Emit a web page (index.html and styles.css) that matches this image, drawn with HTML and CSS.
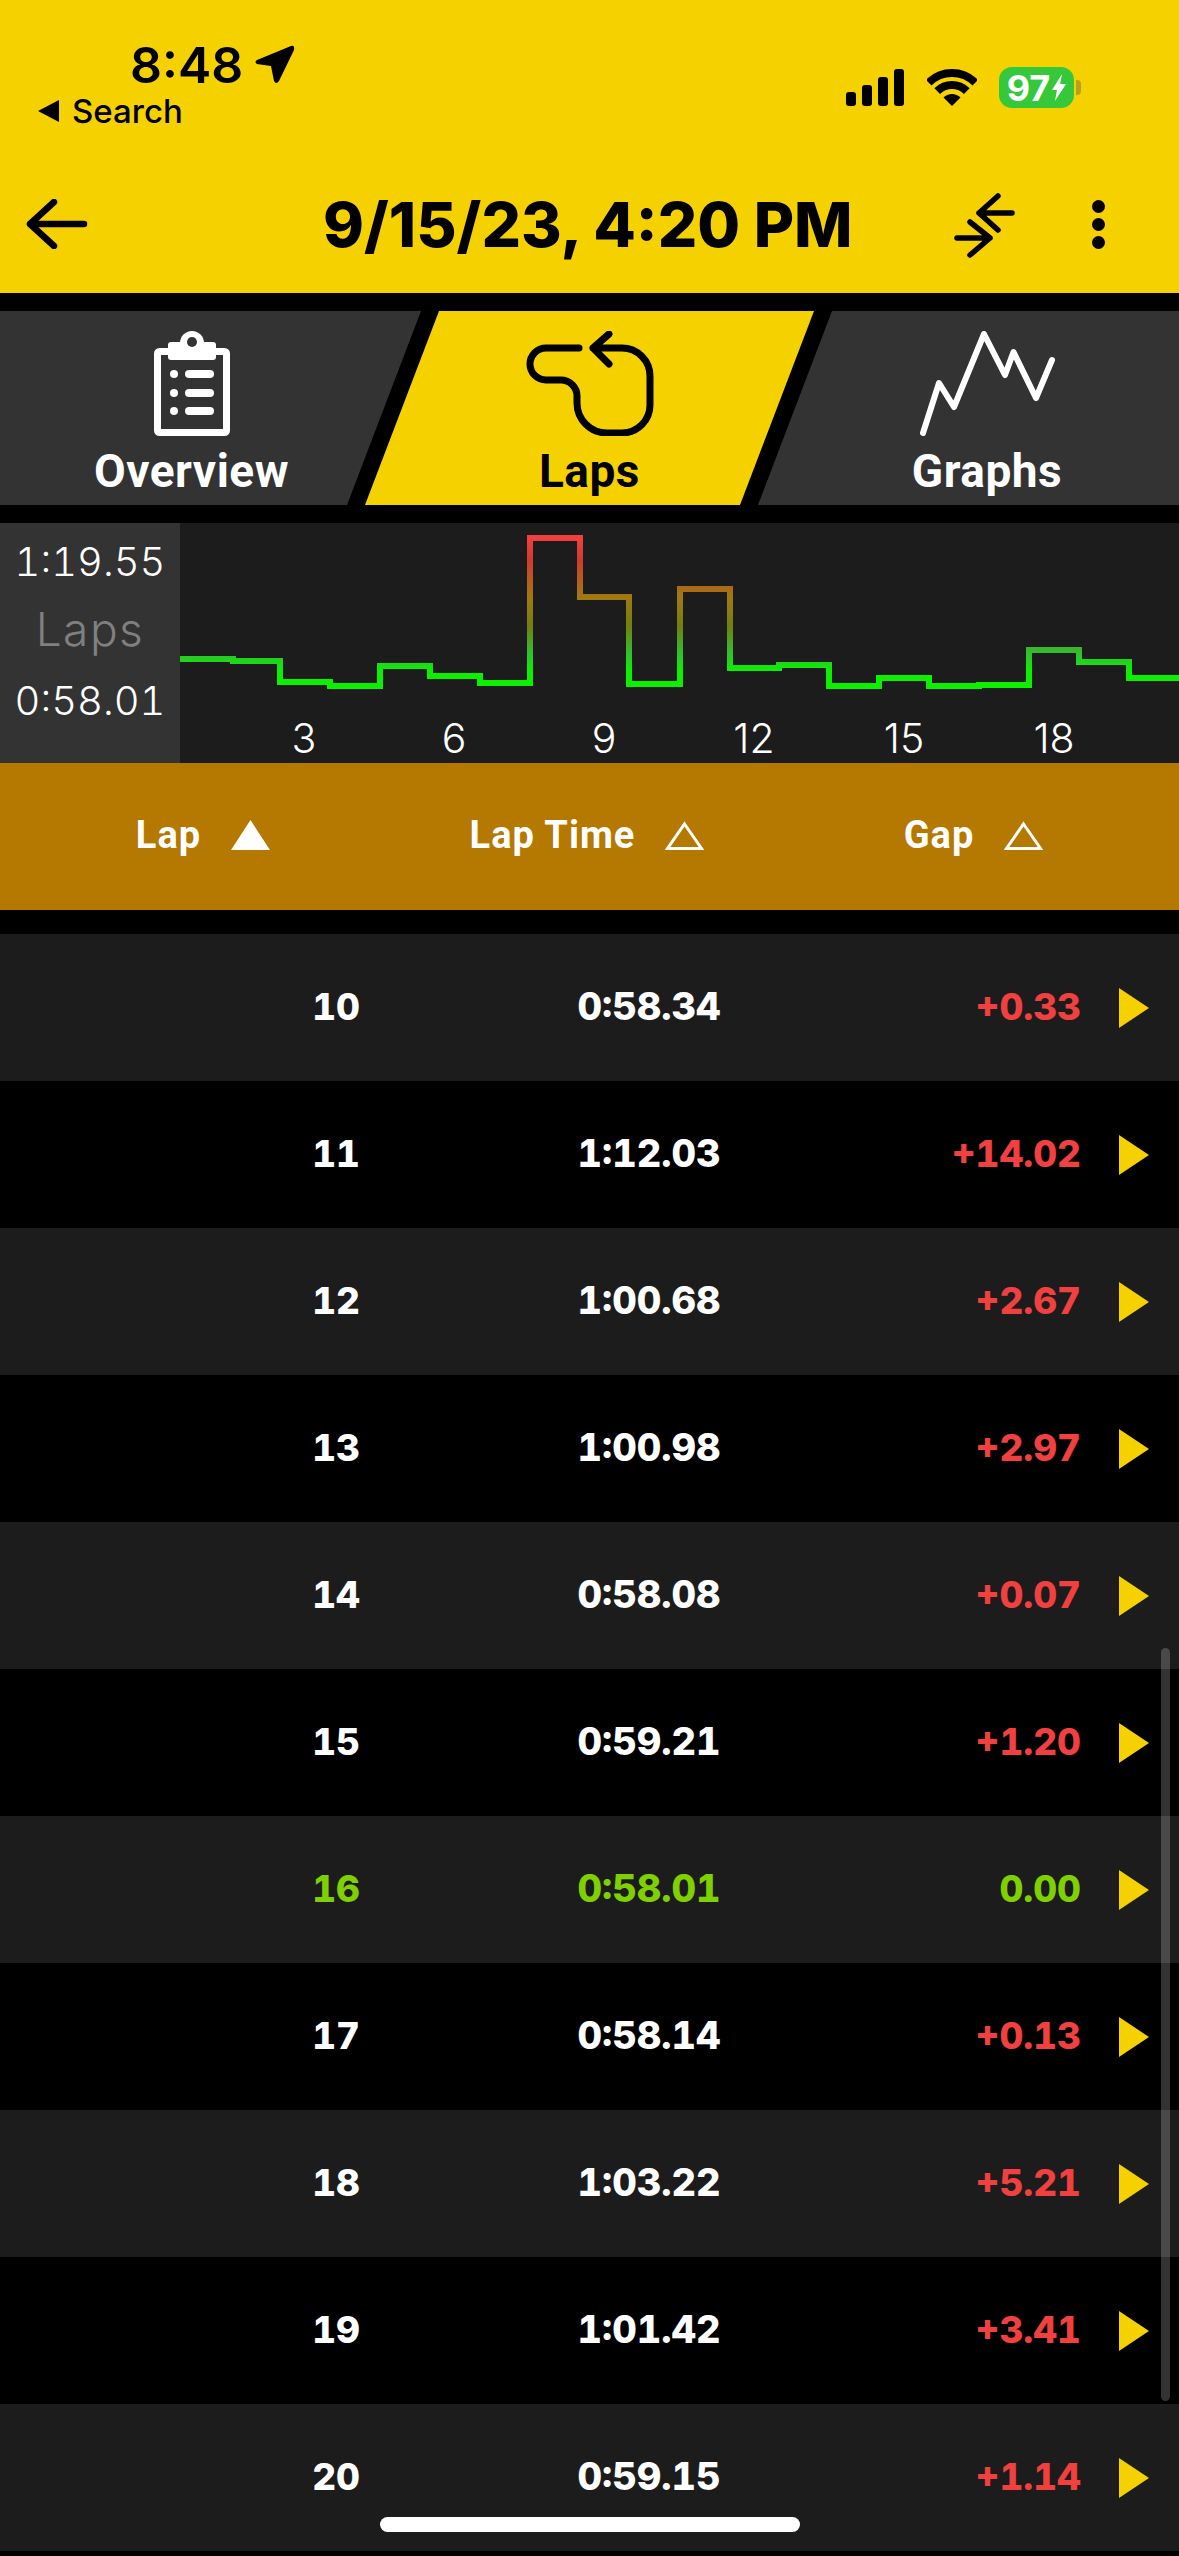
FILE: index.html
```html
<!DOCTYPE html>
<html lang="en">
<head>
    <meta charset="UTF-8">
    <meta name="viewport" content="width=device-width, initial-scale=1.0">
    <title>Laps</title>
    <link rel="stylesheet" href="styles.css">
</head>
<body>
    <div class="screen">
        <header class="top">
            <div class="status">
                <div class="status-left">
                    <div class="clock">
                        <span>8:48</span>
                        <svg class="loc" viewBox="0 0 40 40"><path d="M36 1 2 15q-3 2 0 4l14 2 3 15q2 4 5 0L39 5q1-5-3-4z"/></svg>
                    </div>
                    <div class="crumb">
                        <svg class="crumb-arrow" viewBox="0 0 22 22"><path d="M21 0v22L0 11z"/></svg>
                        <span>Search</span>
                    </div>
                </div>
                <div class="status-right">
                    <svg class="signal" viewBox="0 0 58 37">
                        <rect x="0" y="23" width="10" height="14" rx="3"/>
                        <rect x="16" y="16" width="10" height="21" rx="3"/>
                        <rect x="32" y="8" width="10" height="29" rx="3"/>
                        <rect x="48" y="0" width="10" height="37" rx="3"/>
                    </svg>
                    <svg class="wifi" viewBox="0 0 50 37">
                        <path d="M1.700 13.700A33 33 0 0 1 48.300 13.700" fill="none" stroke="#000" stroke-width="8"/>
                        <path d="M10.200 22.200A21 21 0 0 1 39.800 22.200" fill="none" stroke="#000" stroke-width="8"/>
                        <path d="M25 37 16.500 28.500A12 12 0 0 1 33.500 28.500z"/>
                    </svg>
                    <div class="battery">
                        <span>97</span>
                        <svg class="bolt" viewBox="0 0 14 27"><path d="M10 0 0 16h5L3 27 14 10H8z"/></svg>
                    </div>
                    <div class="battery-nub"></div>
                </div>
            </div>
            <nav class="nav">
                <svg class="back" viewBox="0 0 62 50" fill="none"><path d="M58 25H4M28 3 4 25l24 22" stroke="#000" stroke-width="6.500" stroke-linecap="round" stroke-linejoin="round"/></svg>
                <h1>9/15/23, 4:20 PM</h1>
                <svg class="swap" viewBox="0 0 62 68" fill="none"><path d="M59 23H26M45 6 26 23l19 17M4 48h33M17 32l20 16-20 17" stroke="#000" stroke-width="5.500" stroke-linecap="round" stroke-linejoin="round"/></svg>
                <div class="dots"><i></i><i></i><i></i></div>
            </nav>
        </header>

        <div class="tabs">
            <div class="tab tab-first">
                <svg class="tab-icon" viewBox="0 0 76 105">
                    <rect x="3.500" y="20.500" width="69" height="81" rx="2" fill="none" stroke="#fff" stroke-width="7"/>
                    <rect x="14" y="11" width="48" height="18" rx="3" fill="#fff"/>
                    <circle cx="38" cy="12" r="12" fill="#fff"/>
                    <circle cx="38" cy="11" r="5" fill="#333"/>
                    <circle cx="20" cy="43" r="4" fill="#fff"/><rect x="31" y="39" width="29" height="8" rx="4" fill="#fff"/>
                    <circle cx="20" cy="62" r="4" fill="#fff"/><rect x="31" y="58" width="29" height="8" rx="4" fill="#fff"/>
                    <circle cx="20" cy="80" r="4" fill="#fff"/><rect x="31" y="76" width="29" height="8" rx="4" fill="#fff"/>
                </svg>
                <span>Overview</span>
            </div>
            <div class="tab tab-active">
                <svg class="tab-icon" viewBox="0 0 128 105" fill="none"><path d="M53 17H20a16 16 0 0 0 0 32H35a16 16 0 0 1 16 16V72a30 30 0 0 0 30 30H96a28 28 0 0 0 28-28V45A28 28 0 0 0 96 17H67M83 3 67 17l16 16" stroke="#000" stroke-width="7" stroke-linecap="round" stroke-linejoin="round"/></svg>
                <span>Laps</span>
            </div>
            <div class="tab tab-last">
                <svg class="tab-icon" viewBox="0 0 135 105" fill="none"><path d="M3 102 19 52l15 24L64 3l21 41 8.500-23L116 67l16-38" stroke="#fff" stroke-width="6" stroke-linecap="round" stroke-linejoin="round"/></svg>
                <span>Graphs</span>
            </div>
        </div>

        <section class="summary">
            <div class="range">
                <span>1:19.55</span>
                <span class="range-title">Laps</span>
                <span>0:58.01</span>
            </div>
            <div class="chart">
                <svg class="chart-line" viewBox="180 523 999 187" fill="none">
                    <defs>
                        <linearGradient id="speed" gradientUnits="userSpaceOnUse" x1="0" y1="538" x2="0" y2="686">
                            <stop offset="0" stop-color="#f04040"/>
                            <stop offset="0.15" stop-color="#d03a30"/>
                            <stop offset="0.4" stop-color="#a07a10"/>
                            <stop offset="0.6" stop-color="#708010"/>
                            <stop offset="0.78" stop-color="#30c030"/>
                            <stop offset="0.9" stop-color="#0cf000"/>
                            <stop offset="1" stop-color="#0cf000"/>
                        </linearGradient>
                    </defs>
                    <path stroke="url(#speed)" stroke-width="6" stroke-linejoin="miter" d="M180 659H233V661H280V682H330V686H380V666H430V676H480V683H530V538H580V597H629V684H680V589H730V668H779V665H829V686H879V678H929V686H979V685H1029V650H1079V662H1129V678H1179"/>
                </svg>
                <div class="axis">
                    <span>3</span><span>6</span><span>9</span><span>12</span><span>15</span><span>18</span>
                </div>
            </div>
        </section>

        <div class="heads">
            <div class="head"><span>Lap</span><svg class="sort" viewBox="0 0 39 30"><path d="M19.500 0 39 30H0z" fill="#fff"/></svg></div>
            <div class="head"><span>Lap Time</span><svg class="sort" viewBox="0 0 39 30"><path d="M19.500 4 36.500 28.500H2.500z" fill="none" stroke="#fff" stroke-width="3"/></svg></div>
            <div class="head"><span>Gap</span><svg class="sort" viewBox="0 0 39 30"><path d="M19.500 4 36.500 28.500H2.500z" fill="none" stroke="#fff" stroke-width="3"/></svg></div>
        </div>

        <div class="rows">
            <div class="row"><span class="lap">10</span><span class="time">0:58.34</span><span class="gap">+0.33</span><i class="go"></i></div>
            <div class="row"><span class="lap">11</span><span class="time">1:12.03</span><span class="gap">+14.02</span><i class="go"></i></div>
            <div class="row"><span class="lap">12</span><span class="time">1:00.68</span><span class="gap">+2.67</span><i class="go"></i></div>
            <div class="row"><span class="lap">13</span><span class="time">1:00.98</span><span class="gap">+2.97</span><i class="go"></i></div>
            <div class="row"><span class="lap">14</span><span class="time">0:58.08</span><span class="gap">+0.07</span><i class="go"></i></div>
            <div class="row"><span class="lap">15</span><span class="time">0:59.21</span><span class="gap">+1.20</span><i class="go"></i></div>
            <div class="row row-best"><span class="lap">16</span><span class="time">0:58.01</span><span class="gap">0.00</span><i class="go"></i></div>
            <div class="row"><span class="lap">17</span><span class="time">0:58.14</span><span class="gap">+0.13</span><i class="go"></i></div>
            <div class="row"><span class="lap">18</span><span class="time">1:03.22</span><span class="gap">+5.21</span><i class="go"></i></div>
            <div class="row"><span class="lap">19</span><span class="time">1:01.42</span><span class="gap">+3.41</span><i class="go"></i></div>
            <div class="row"><span class="lap">20</span><span class="time">0:59.15</span><span class="gap">+1.14</span><i class="go"></i></div>
        </div>

        <div class="scrollbar"></div>
        <div class="home-bar"></div>
    </div>
</body>
</html>
```

FILE: styles.css
```css
:root {
    --yellow: #f6d100;
    --amber: #b57800;
    --panel: #333333;
    --row: #1c1c1c;
    --red: #f04040;
    --green: #80d000;
}

html, body {
    margin: 0;
    background-color: #000;
}

body {
    font-family: 'Inter', sans-serif;
    color: #fff;
}

.screen {
    position: relative;
    width: 1179px;
    height: 2556px;
    overflow: hidden;
    background-color: #000;
}

/* yellow top area */
.top {
    height: 293px;
    background-color: var(--yellow);
    color: #000;
    box-sizing: border-box;
}

.status {
    display: flex;
    justify-content: space-between;
    height: 187px;
    box-sizing: border-box;
    padding: 40px 98px 0 38px;
}

.clock {
    display: flex;
    align-items: center;
    gap: 12px;
    height: 50px;
    margin-left: 92px;
    font-size: 50px;
    font-weight: 600;
}

.loc {
    width: 40px;
    height: 40px;
}

.crumb {
    display: flex;
    align-items: center;
    gap: 12px;
    margin-top: 1px;
    font-size: 33px;
    font-weight: 500;
}

.crumb-arrow {
    width: 22px;
    height: 22px;
}

.status-right {
    display: flex;
    align-items: center;
    height: 41px;
    margin-top: 27px;
}

.signal {
    width: 58px;
    height: 37px;
    margin-right: 23px;
}

.wifi {
    width: 50px;
    height: 37px;
    margin-right: 22px;
}

.battery {
    display: flex;
    align-items: center;
    justify-content: center;
    gap: 2px;
    width: 75px;
    height: 41px;
    border-radius: 13px;
    background-color: #35c83a;
    color: #fff;
    font-size: 36px;
    font-weight: 700;
}

.bolt {
    width: 14px;
    height: 27px;
    fill: #fff;
}

.battery-nub {
    width: 5px;
    height: 15px;
    margin-left: 2px;
    border-radius: 0 4px 4px 0;
    background-color: #b9a020;
}

.nav {
    display: flex;
    align-items: center;
    height: 74px;
    padding-left: 26px;
}

.back {
    width: 62px;
    height: 50px;
}

h1 {
    margin: 0 0 0 235px;
    width: 528px;
    font-size: 62px;
    font-weight: 800;
    white-space: nowrap;
}

.swap {
    width: 62px;
    height: 68px;
    margin-left: 102px;
}

.dots {
    display: flex;
    flex-direction: column;
    gap: 5px;
    margin-left: 77px;
}

.dots i {
    display: block;
    width: 13px;
    height: 13px;
    border-radius: 50%;
    background-color: #000;
}

/* slanted tabs */
.tabs {
    display: flex;
    height: 194px;
    margin-top: 18px;
}

.tab {
    display: flex;
    flex-direction: column;
    align-items: center;
    flex-shrink: 0;
    box-sizing: border-box;
    padding-top: 20px;
    font-family: 'Roboto', sans-serif;
    font-size: 46px;
    font-weight: 700;
    letter-spacing: 0.500px;
    line-height: 52px;
}

.tab-icon {
    height: 105px;
    margin-bottom: 9px;
}

.tab-first {
    width: 421px;
    padding-right: 38px;
    background-color: var(--panel);
    clip-path: polygon(0 0, 100% 0, 347px 100%, 0 100%);
}

.tab-active {
    width: 449px;
    margin-left: -56px;
    background-color: var(--yellow);
    color: #000;
    clip-path: polygon(74px 0, 100% 0, 375px 100%, 0 100%);
}

.tab-last {
    width: 421px;
    margin-left: -56px;
    padding-left: 37px;
    background-color: var(--panel);
    clip-path: polygon(74px 0, 100% 0, 100% 100%, 0 100%);
}

/* lap time chart */
.summary {
    display: flex;
    height: 240px;
    margin-top: 18px;
}

.range {
    display: flex;
    flex-direction: column;
    align-items: center;
    width: 180px;
    padding-top: 15px;
    box-sizing: border-box;
    background-color: var(--panel);
    font-weight: 300;
    font-size: 40px;
    font-variant-numeric: tabular-nums;
    line-height: 48px;
}

.range-title {
    margin: 13px 0 18px;
    color: #808080;
    font-size: 46px;
    letter-spacing: 1.500px;
    line-height: 60px;
}

.chart {
    flex: 1;
    background-color: var(--row);
}

.chart-line {
    display: block;
    width: 999px;
    height: 187px;
}

.axis {
    display: flex;
    padding: 3px 0 0 49px;
    font-weight: 300;
    font-size: 41px;
    line-height: 50px;
}

.axis span {
    width: 150px;
    text-align: center;
}

/* table */
.heads {
    display: grid;
    grid-template-columns: 406px 362px 411px;
    height: 147px;
    box-sizing: border-box;
    padding-bottom: 3px;
    background-color: var(--amber);
    font-family: 'Roboto', sans-serif;
    font-size: 38px;
    font-weight: 700;
    letter-spacing: 1px;
}

.head {
    display: flex;
    align-items: center;
    justify-content: center;
    gap: 30px;
}

.sort {
    width: 39px;
    height: 30px;
}

.rows {
    margin-top: 24px;
}

.row {
    display: grid;
    grid-template-columns: 360px 578px 143px 1fr;
    align-items: center;
    height: 147px;
    font-size: 37px;
    font-weight: 800;
    font-variant-numeric: tabular-nums;
}

.row:nth-child(odd) {
    background-color: var(--row);
}

.row span {
    margin-bottom: 3px;
}

.lap {
    text-align: right;
}

.time {
    text-align: center;
    font-size: 38px;
}

.gap {
    text-align: right;
    color: var(--red);
    white-space: nowrap;
}

.row-best .lap,
.row-best .time,
.row-best .gap {
    color: var(--green);
}

.go {
    display: block;
    width: 0;
    height: 0;
    margin-left: 38px;
    border-style: solid;
    border-width: 20px 0 20px 30px;
    border-color: transparent transparent transparent var(--yellow);
}

/* overlays */
.scrollbar {
    position: absolute;
    left: 1161px;
    top: 1648px;
    width: 9px;
    height: 753px;
    border-radius: 5px;
    background-color: rgba(255, 255, 255, 0.2);
}

.home-bar {
    position: absolute;
    left: 380px;
    top: 2517px;
    width: 420px;
    height: 15px;
    border-radius: 8px;
    background-color: #fff;
}
```
